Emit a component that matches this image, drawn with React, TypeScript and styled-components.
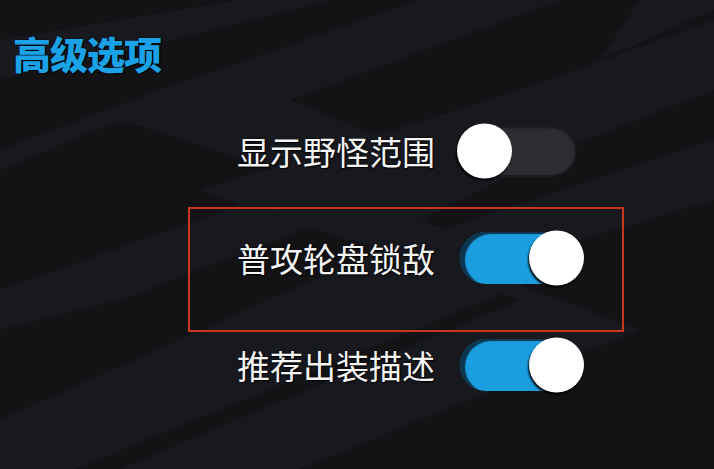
import React from "react";
import styled, { createGlobalStyle } from "styled-components";

const GlobalStyle = createGlobalStyle`
	html, body {
		margin: 0;
		padding: 0;
		background: #131316;
	}
`;

const Page = styled.div`
	position: relative;
	width: 714px;
	height: 469px;
	overflow: hidden;
	box-sizing: border-box;
	padding: 34px 0 0 13px;
	background: #131316;
	font-family: "Noto Sans CJK SC", "Noto Sans", sans-serif;
`;

const Backdrop = styled.svg`
	position: absolute;
	inset: 0;
	width: 100%;
	height: 100%;
	z-index: 0;
`;

const Content = styled.div`
	position: relative;
	z-index: 1;
`;

const Title = styled.h1`
	margin: 0;
	font-size: 38px;
	line-height: 38px;
	font-weight: 900;
	color: #1ba2e6;
	letter-spacing: -1px;
	text-shadow: 0 0 2px #000, 1px 1px 1px #000;
`;

const Options = styled.div`
	display: flex;
	flex-direction: column;
	margin: 51px 0 0 175px;
	width: 436px;
`;

const Row = styled.div<{ $gap?: number }>`
	display: grid;
	grid-template-columns: 1fr auto;
	align-items: center;
	column-gap: 25px;
	height: 56px;
	padding-right: 47px;
	margin-bottom: ${(p) => p.$gap ?? 0}px;
`;

const Highlight = styled.div`
	padding: 23px 0 46px;
	margin-bottom: 5px;
	box-shadow: inset 0 0 0 2px #c8361c;
`;

const Label = styled.span`
	justify-self: end;
	font-size: 33px;
	line-height: 1;
	color: #f4f4f4;
	text-shadow: 0 0 2px #000, 1px 1px 1px #000;
`;

const Track = styled.div<{ $on: boolean }>`
	position: relative;
	width: 117px;
	height: 52px;
	border-radius: 26px;
	box-sizing: border-box;
	background: ${(p) => (p.$on ? "#1a9ee0" : "#2d2d31")};
	border: ${(p) => (p.$on ? "none" : "2px solid #1b1b1e")};
	box-shadow: ${(p) =>
		p.$on ? "inset 5px 2px 1px rgba(10, 18, 28, 0.75)" : "inset 0 1px 2px rgba(0,0,0,0.5)"};
`;

const Knob = styled.div<{ $on: boolean }>`
	position: absolute;
	top: 50%;
	width: 55px;
	height: 55px;
	border-radius: 50%;
	background: #fff;
	transform: translateY(-50%);
	left: ${(p) => (p.$on ? "auto" : "-5px")};
	right: ${(p) => (p.$on ? "-7px" : "auto")};
	box-shadow: -1px 2px 2px rgba(0, 0, 0, 0.95);
`;

const Toggle = ({ on }: { on: boolean }) => (
	<Track $on={on}>
		<Knob $on={on} />
	</Track>
);

const App = () => {
	return (
		<Page>
			<GlobalStyle />
			<Backdrop viewBox="0 0 714 469" preserveAspectRatio="none">
				<g fill="#17191e">
					<polygon points="0,40 240,0 330,0 90,60 0,80" />
					<polygon points="0,150 160,90 420,0 560,0 290,100 460,170 120,300 0,330 0,290 310,180 120,120 0,170" />
					<polygon points="0,560 0,420 380,250 200,190 520,90 714,20 714,90 560,150 420,220 560,270 0,500" />
					<polygon points="640,0 714,0 714,10 600,60" />
					<polygon points="120,469 520,300 380,250 714,140 714,200 480,270 640,330 300,469" />
				</g>
			</Backdrop>
			<Content>
				<Title>高级选项</Title>
				<Options>
					<Row $gap={28}>
						<Label>显示野怪范围</Label>
						<Toggle on={false} />
					</Row>
					<Highlight>
						<Row>
							<Label>普攻轮盘锁敌</Label>
							<Toggle on={true} />
						</Row>
					</Highlight>
					<Row>
						<Label>推荐出装描述</Label>
						<Toggle on={true} />
					</Row>
				</Options>
			</Content>
		</Page>
	);
};

export default App;
